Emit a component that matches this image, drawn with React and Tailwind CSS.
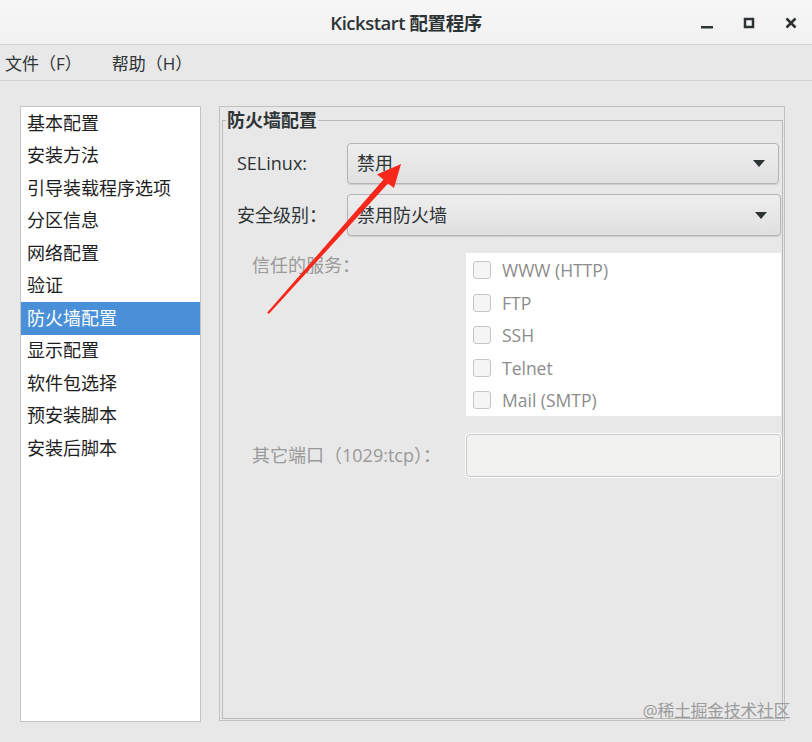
import React from 'react'

const font = { fontFamily: '"Open Sans", "Noto Sans CJK SC", sans-serif' }

const navItems = [
  '基本配置',
  '安装方法',
  '引导装载程序选项',
  '分区信息',
  '网络配置',
  '验证',
  '防火墙配置',
  '显示配置',
  '软件包选择',
  '预安装脚本',
  '安装后脚本',
]

const services = ['WWW (HTTP)', 'FTP', 'SSH', 'Telnet', 'Mail (SMTP)']

function Caret() {
  return (
    <svg width="12" height="7" viewBox="0 0 12 7" className="mr-[13px] shrink-0">
      <path d="M0 0 H12 L6 7 Z" fill="#2e3436" />
    </svg>
  )
}

function Combo({ value, className = '' }) {
  return (
    <div
      className={`flex-1 h-full flex items-center justify-between rounded-[4px] border border-[#b4b4b4] bg-gradient-to-b from-[#eeeeee] to-[#e0e0e0] shadow-[0_1px_1px_rgba(0,0,0,0.12)] ${className}`}
    >
      <span className="pl-[9px] text-[18px] text-[#2e3436]">{value}</span>
      <Caret />
    </div>
  )
}

function WindowControls() {
  return (
    <div className="flex justify-end">
      <button className="w-[42px] h-[45px] flex items-center justify-center">
        <svg width="14" height="14" viewBox="0 0 14 14">
          <rect x="1" y="10" width="12" height="2.5" fill="#2e3436" />
        </svg>
      </button>
      <button className="w-[42px] h-[45px] flex items-center justify-center">
        <svg width="14" height="14" viewBox="0 0 14 14">
          <rect x="3" y="3" width="8" height="8" fill="none" stroke="#2e3436" strokeWidth="2.5" />
        </svg>
      </button>
      <button className="w-[42px] h-[45px] flex items-center justify-center">
        <svg width="14" height="14" viewBox="0 0 14 14">
          <path d="M2.5 2.5 L11.5 11.5 M11.5 2.5 L2.5 11.5" stroke="#2e3436" strokeWidth="2.6" />
        </svg>
      </button>
    </div>
  )
}

export default function App() {
  return (
    <div className="relative w-[812px] h-[742px] overflow-hidden bg-[#e8e8e8] text-[#2e3436]" style={font}>
      {/* Title bar */}
      <header className="grid grid-cols-[1fr_auto_1fr] items-center h-[45px] bg-gradient-to-b from-[#f7f7f7] to-[#f1f1f1] border-b border-[#cfcfcf]">
        <div />
        <div className="text-[18.5px] font-semibold tracking-tight text-[#2e3436]">Kickstart 配置程序</div>
        <WindowControls />
      </header>

      {/* Menu bar */}
      <nav className="flex items-center h-[36px] pt-[3px] border-b border-[#d2d2d2] text-[17px]">
        <span className="pl-[5px]">文件（F）</span>
        <span className="pl-[30px]">帮助（H）</span>
      </nav>

      {/* Body */}
      <div className="flex gap-[18px] pl-[20px] pt-[25px]">
        <ul className="w-[181px] h-[616px] bg-white border border-[#c4c4c4] text-[18px]">
          {navItems.map((item) => (
            <li
              key={item}
              className={`h-[32.5px] flex items-center pl-[6px] ${
                item === '防火墙配置' ? 'bg-[#4a90d9] text-white' : 'text-[#1e1e1e]'
              }`}
            >
              {item}
            </li>
          ))}
        </ul>

        <div className="w-[566px] h-[615px] border border-[#c0c0c0] pt-[2px] px-[1px] flex">
          <fieldset className="flex-1 mb-[1px] ml-[1px] border border-[#b9b9b9] pr-[1px]">
            <legend className="ml-[3px] px-[1px] text-[18px] font-bold leading-[22px] text-[#2e3436]">
              防火墙配置
            </legend>

            <div className="pt-[12px] pl-[14px] flex flex-col">
              <div className="flex items-center h-[41px]">
                <label className="w-[110px] text-[18px]">SELinux:</label>
                <Combo value="禁用" className="mr-[2px]" />
              </div>

              <div className="flex items-center h-[42px] mt-[10px]">
                <label className="w-[110px] text-[18px]">安全级别：</label>
                <Combo value="禁用防火墙" />
              </div>

              <div className="flex mt-[17px]">
                <label className="w-[229px] pl-[15px] text-[18px] leading-[24px] text-[#9a9a9a]">信任的服务：</label>
                <div className="flex-1 h-[163px] bg-white pt-[1px]">
                  {services.map((s) => (
                    <div key={s} className="h-[32.5px] flex items-center">
                      <span className="ml-[7px] w-[18px] h-[18px] rounded-[3px] border border-[#c6c6c6] bg-[#f5f5f5]" />
                      <span className="ml-[11px] text-[17.5px] text-[#8c8c8c]">{s}</span>
                    </div>
                  ))}
                </div>
              </div>

              <div className="flex items-center h-[43px] mt-[18px]">
                <label className="w-[229px] pl-[15px] text-[18px] text-[#9a9a9a]">其它端口（1029:tcp）：</label>
                <div className="flex-1 h-full rounded-[4px] border border-[#c8c8c8] bg-[#f2f2f0] shadow-[0_0_0_1px_#ffffff]" />
              </div>
            </div>
          </fieldset>
        </div>
      </div>

      {/* Red annotation arrow */}
      <svg className="absolute inset-0 pointer-events-none" width="812" height="742" viewBox="0 0 812 742">
        <polygon
          points="401,164 394,188 388,183.5 268.8,314 267.2,312.5 383.5,179.5 377,174.5"
          fill="#f5281b"
        />
      </svg>

      {/* Watermark */}
      <div className="absolute right-[22px] bottom-[19px] text-[17px] text-[#9c9c9c] tracking-tight">
        @稀土掘金技术社区
      </div>
    </div>
  )
}
